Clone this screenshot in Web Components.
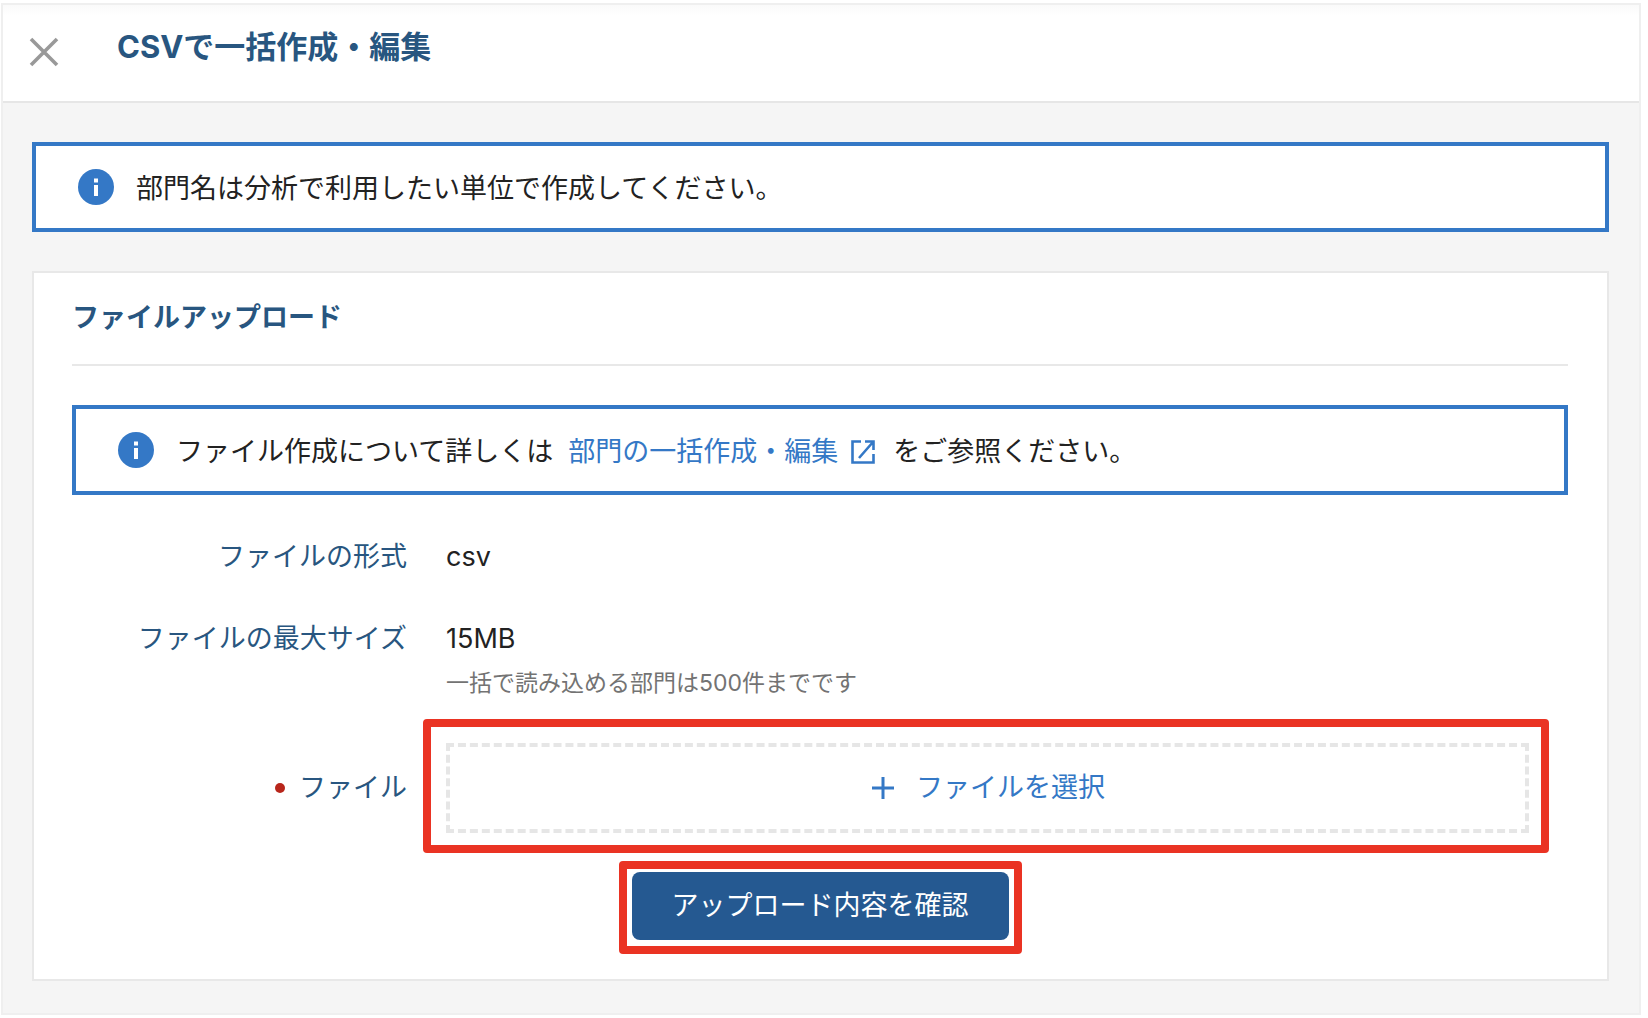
<!DOCTYPE html>
<html lang="ja">
<head>
<meta charset="utf-8">
<meta name="viewport" content="width=device-width, initial-scale=1">
<title>CSVで一括作成・編集</title>
<style>
  body {
    margin: 0;
    padding: 3px 7px 0 1px;
    background-color: #fff;
    color: #222;
    font-family: Inter, "Noto Sans CJK JP", sans-serif;
    font-size: 27px;
    line-height: 40px;
  }
</style>
</head>
<body>
<modal-page>
  <span slot="title">CSVで一括作成・編集</span>
  <info-alert>部門名は分析で利用したい単位で作成してください。</info-alert>
  <upload-card></upload-card>
</modal-page>

<script>
class ModalPage extends HTMLElement {
  constructor() {
    super();
    this.attachShadow({ mode: "open" });
    this.render();
  }

  connectedCallback() {
    this.shadowRoot
      .querySelector("button")
      .addEventListener("click", () => this.dispatchEvent(new CustomEvent("close")));
  }

  render() {
    this.shadowRoot.innerHTML = `
      <style>
        :host {
          display: block;
          border: 2px solid #efefef;
          background-color: #f5f5f5;
        }
        header {
          display: flex;
          align-items: flex-start;
          gap: 56px;
          box-sizing: border-box;
          height: 98px;
          padding: 22px 24px;
          border-bottom: 2px solid #e6e6e6;
          background: linear-gradient(#fafafa, #fff 10px);
        }
        button {
          display: flex;
          margin: 8px 0 0;
          padding: 0;
          border: 0;
          background: none;
          cursor: pointer;
        }
        h1 {
          margin: 0;
          color: #285680;
          font-size: 31px;
          font-weight: 700;
          line-height: 40px;
        }
        main {
          display: grid;
          gap: 39px;
          padding: 39px 30px 32px 29px;
        }
      </style>

      <header>
        <button type="button" aria-label="閉じる">
          <svg xmlns="http://www.w3.org/2000/svg" aria-hidden="true" viewBox="0 0 34 34" width="34" height="34">
            <path fill="none" stroke="#999" stroke-width="3.6" d="M4 4 30 30M30 4 4 30" />
          </svg>
        </button>
        <h1><slot name="title"></slot></h1>
      </header>
      <main>
        <slot></slot>
      </main>
    `;
  }
}

class InfoAlert extends HTMLElement {
  constructor() {
    super();
    this.attachShadow({ mode: "open" });
    this.render();
  }

  render() {
    this.shadowRoot.innerHTML = `
      <style>
        :host {
          display: flex;
          align-items: center;
          gap: 22px;
          box-sizing: border-box;
          min-height: 90px;
          padding: 0 42px;
          border: 4px solid #3478c6;
          background-color: #fff;
        }
        svg {
          flex: none;
        }
        div {
          padding-top: 3px;
        }
      </style>

      <svg xmlns="http://www.w3.org/2000/svg" aria-hidden="true" viewBox="0 0 36 36" width="36" height="36">
        <circle cx="18" cy="18" r="18" fill="#3478c6" />
        <path fill="#fff" d="M16 9.5h4v4h-4zM16 16h4v11h-4z" />
      </svg>
      <div><slot></slot></div>
    `;
  }
}

class FormRow extends HTMLElement {
  constructor() {
    super();
    this.attachShadow({ mode: "open" });
    this.render();
  }

  render() {
    this.shadowRoot.innerHTML = `
      <style>
        :host {
          display: grid;
          grid-template-columns: 335px 1fr;
          gap: 39px;
        }
        .label {
          display: flex;
          align-items: center;
          justify-content: flex-end;
          gap: 14px;
          color: #285680;
        }
        :host(:not([middle])) .label {
          align-self: start;
        }
        :host([required]) .label::before {
          content: "";
          width: 10px;
          height: 10px;
          border-radius: 50%;
          background-color: #b8261b;
        }
      </style>

      <div class="label"><slot name="label"></slot></div>
      <div><slot></slot></div>
    `;
  }
}

/* red frame drawn round whatever is slotted in */
class MarkFrame extends HTMLElement {
  constructor() {
    super();
    this.attachShadow({ mode: "open" });
    this.render();
  }

  render() {
    this.shadowRoot.innerHTML = `
      <style>
        :host {
          display: block;
          position: relative;
        }
        :host::after {
          content: "";
          position: absolute;
          inset: var(--frame-inset, -12px);
          border: 8px solid #ea3323;
          border-radius: 4px;
          pointer-events: none;
        }
      </style>

      <slot></slot>
    `;
  }
}

class UploadCard extends HTMLElement {
  constructor() {
    super();
    this.attachShadow({ mode: "open" });
    this.render();
  }

  connectedCallback() {
    this.shadowRoot.querySelector(".picker").addEventListener("click", () => {
      this.shadowRoot.querySelector("input").click();
    });
  }

  render() {
    this.shadowRoot.innerHTML = `
      <style>
        :host {
          display: block;
          padding: 25px 39px 39px 38px;
          border: 2px solid #e8e8e8;
          background-color: #fff;
        }
        h2 {
          margin: 0 0 39px;
          padding-bottom: 26px;
          border-bottom: 2px solid #e8e8e8;
          color: #285680;
          font-size: 27px;
          font-weight: 700;
          line-height: 40px;
        }
        a {
          display: inline-flex;
          align-items: center;
          gap: 10px;
          margin: 0 15px;
          color: #3478c6;
          text-decoration: none;
        }
        form {
          display: grid;
          gap: 42px;
          padding: 42px 39px 0 0;
        }
        p {
          margin: 0;
        }
        .help {
          margin-top: 6px;
          color: #737373;
          font-size: 23px;
          line-height: 36px;
        }
        button {
          font: inherit;
          cursor: pointer;
        }
        .picker {
          display: flex;
          align-items: center;
          justify-content: center;
          gap: 20px;
          box-sizing: border-box;
          width: 100%;
          height: 90px;
          padding: 0;
          border: 4px dashed #e6e6e6;
          background: none;
          color: #3478c6;
        }
        .picker-frame {
          --frame-inset: -24px -20px -20px -23px;
        }
        .submit {
          display: block;
          height: 68px;
          padding: 0 40px;
          border: 0;
          border-radius: 8px;
          background-color: #255991;
          color: #fff;
        }
        .submit-frame {
          --frame-inset: -11px -13px -14px -13px;
          width: fit-content;
          margin: 39px auto 0;
        }
      </style>

      <h2>ファイルアップロード</h2>
      <info-alert>ファイル作成について詳しくは<a href="#">部門の一括作成・編集
        <svg xmlns="http://www.w3.org/2000/svg" aria-hidden="true" viewBox="0 0 30 30" width="30" height="30">
          <path fill="none" stroke="#3478c6" stroke-width="2.600" d="M13 4.500H4.500v21h21V17M17 4.500h8.500V13M25 5 11 21" />
        </svg></a>をご参照ください。</info-alert>

      <form>
        <form-row>
          <span slot="label">ファイルの形式</span>
          <p>csv</p>
        </form-row>
        <form-row>
          <span slot="label">ファイルの最大サイズ</span>
          <p>15MB</p>
          <p class="help">一括で読み込める部門は500件までです</p>
        </form-row>
        <form-row required middle>
          <label slot="label" for="picker">ファイル</label>
          <mark-frame class="picker-frame">
            <button type="button" class="picker" id="picker">
              <svg xmlns="http://www.w3.org/2000/svg" aria-hidden="true" viewBox="0 0 26 26" width="26" height="26">
                <path fill="none" stroke="#3478c6" stroke-width="3" d="M13 2v22M2 13h22" />
              </svg>
              ファイルを選択
            </button>
            <input type="file" accept=".csv" hidden>
          </mark-frame>
        </form-row>
      </form>

      <mark-frame class="submit-frame">
        <button type="button" class="submit">アップロード内容を確認</button>
      </mark-frame>
    `;
  }
}

customElements.define("modal-page", ModalPage);
customElements.define("info-alert", InfoAlert);
customElements.define("form-row", FormRow);
customElements.define("mark-frame", MarkFrame);
customElements.define("upload-card", UploadCard);
</script>
</body>
</html>
